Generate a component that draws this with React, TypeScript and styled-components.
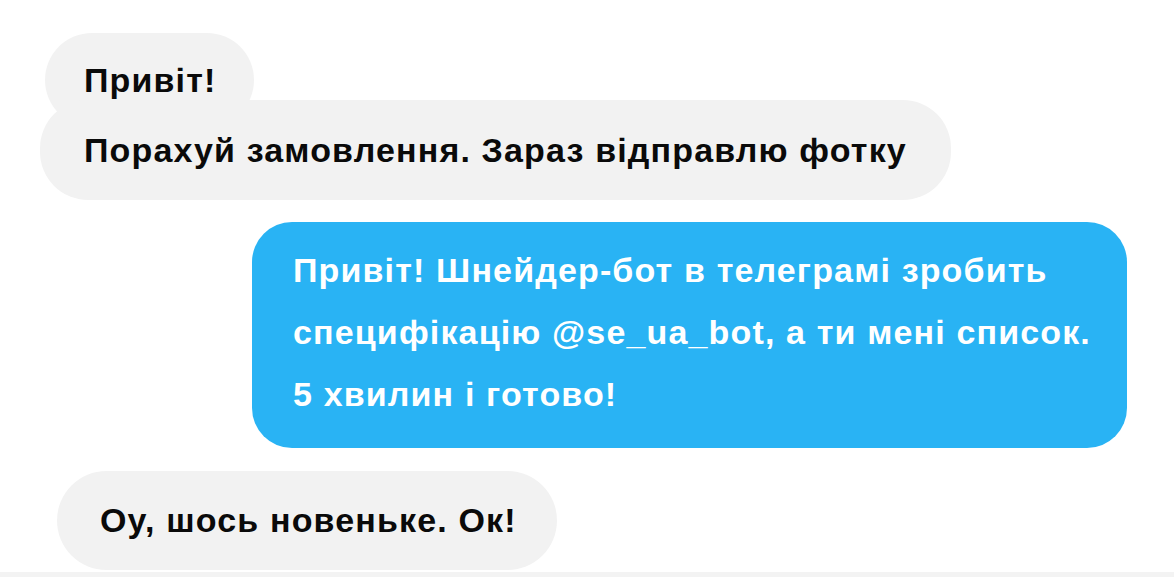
import styled, { createGlobalStyle } from 'styled-components';

const GlobalStyle = createGlobalStyle`
  html, body {
    margin: 0;
    padding: 0;
    background: #ffffff;
  }
  body {
    font-family: 'Liberation Sans', Arial, Helvetica, sans-serif;
  }
`;

export default function App() {
  return (
    <>
      <GlobalStyle />
      <Screen>
        <Thread>
          <IncomingGroup>
            <Bubble $first>Привіт!</Bubble>
            <Bubble $stacked>Порахуй замовлення. Зараз відправлю фотку</Bubble>
          </IncomingGroup>
          <OutgoingBubble>
            Привіт! Шнейдер-бот в телеграмі зробить
            <br />
            специфікацію @se_ua_bot, а ти мені список.
            <br />
            5 хвилин і готово!
          </OutgoingBubble>
          <ReplyBubble>Оу, шось новеньке. Ок!</ReplyBubble>
        </Thread>
        <BottomStrip />
      </Screen>
    </>
  );
}

const Screen = styled.div`
  width: 1174px;
  height: 577px;
  display: flex;
  flex-direction: column;
  overflow: hidden;
  background: #ffffff;
`;

const Thread = styled.div`
  flex: 1;
  display: flex;
  flex-direction: column;
  align-items: flex-start;
  padding: 33px 47px 0 40px;
`;

const IncomingGroup = styled.div`
  display: flex;
  flex-direction: column;
  align-items: flex-start;
`;

const Text = `
  font-size: 34px;
  font-weight: 700;
  letter-spacing: 1.15px;
  white-space: nowrap;
`;

const Bubble = styled.div<{ $first?: boolean; $stacked?: boolean }>`
  ${Text}
  background: #f2f2f2;
  color: #0a0a0a;
  line-height: 40px;
  border-radius: 48px;
  box-sizing: border-box;
  display: flex;
  align-items: center;
  height: ${(p) => (p.$first ? '94px' : '100px')};
  padding: ${(p) => (p.$first ? '0 38px 0 39px' : '0 44px 0 44px')};
  margin-left: ${(p) => (p.$first ? '5px' : '0')};
  margin-top: ${(p) => (p.$stacked ? '-27px' : '0')};
`;

const OutgoingBubble = styled.div`
  ${Text}
  align-self: flex-end;
  margin-top: 22px;
  width: 875px;
  box-sizing: border-box;
  background: #29b3f4;
  color: #ffffff;
  line-height: 62px;
  padding: 17px 20px 23px 41px;
  border-radius: 40px;
`;

const ReplyBubble = styled.div`
  ${Text}
  margin-top: 23px;
  margin-left: 17px;
  height: 99px;
  box-sizing: border-box;
  display: flex;
  align-items: center;
  background: #f2f2f2;
  color: #0a0a0a;
  padding: 0 40px 0 43px;
  border-radius: 50px;
`;

const BottomStrip = styled.div`
  height: 5px;
  background: #f3f3f3;
`;
